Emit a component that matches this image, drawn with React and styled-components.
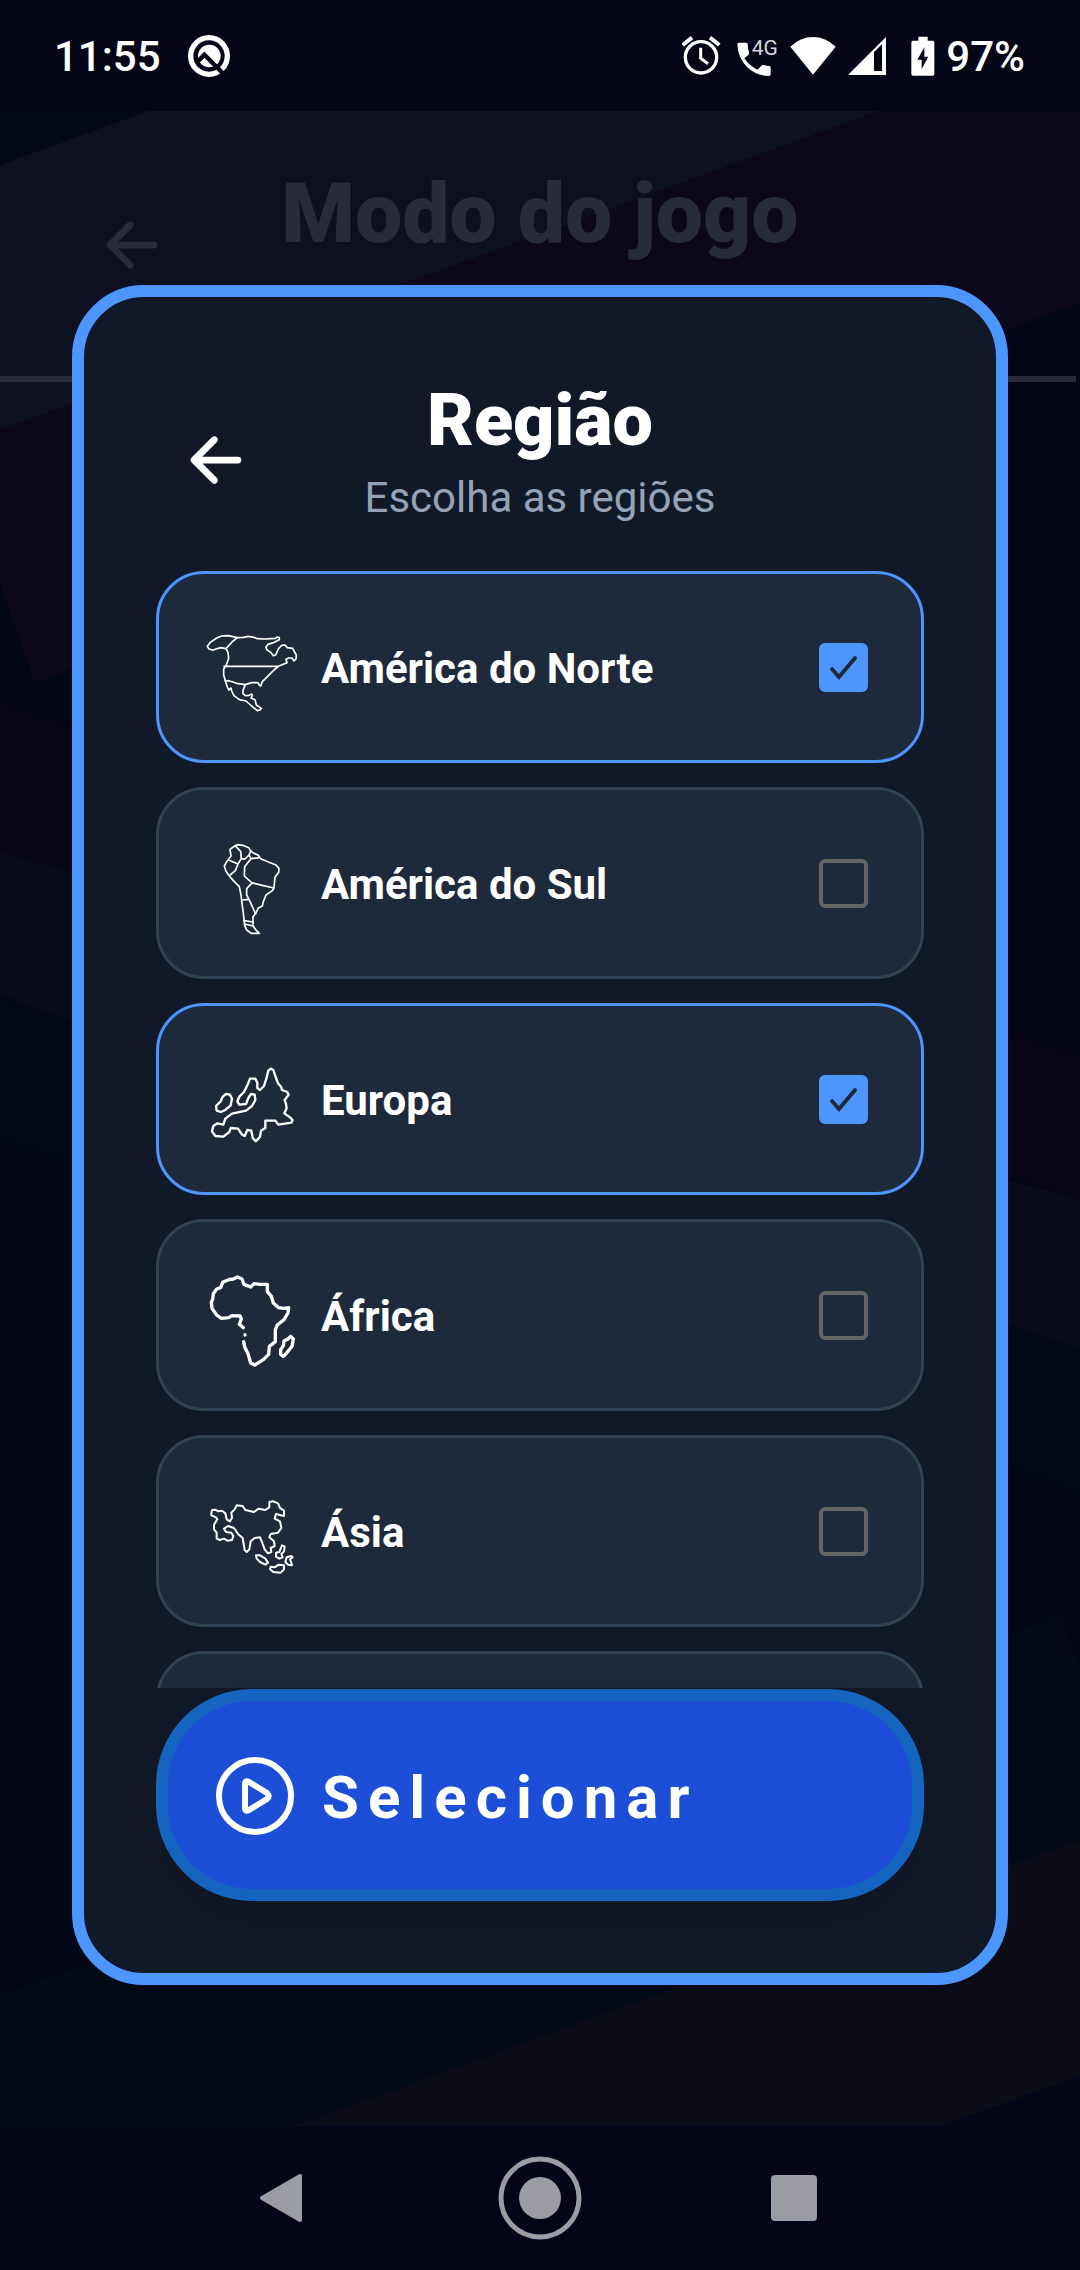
import React, { useState } from "react";
import styled, { createGlobalStyle } from "styled-components";
import { IoArrowBack } from "react-icons/io5";

const GlobalStyle = createGlobalStyle`
  * {
    box-sizing: border-box;
  }
  body {
    margin: 0;
    background: #030617;
    font-family: Roboto, "Noto Sans", sans-serif;
  }
  button {
    border: none;
    background: none;
    padding: 0;
    color: inherit;
    font: inherit;
    cursor: pointer;
  }
  svg {
    display: block;
    flex-shrink: 0;
  }
`;

const Screen = styled.div`
  min-height: 100vh;
  display: flex;
  flex-direction: column;
  color: #fff;
`;

const StatusBar = styled.div`
  height: 111px;
  display: flex;
  align-items: center;
  justify-content: space-between;
  padding: 0 55px 0 54px;
  font-size: 42px;
  font-weight: 500;
  line-height: 48px;
`;

const StatusGroup = styled.div`
  display: flex;
  align-items: center;
  gap: ${({ $gap }) => $gap}px;
`;

const StatusText = styled.span`
  padding-top: 3px;
`;

const Battery = styled.svg`
  margin-left: 14px;
`;

const Game = styled.main`
  position: relative;
  flex: 1;
`;

const Backdrop = styled.svg`
  position: absolute;
  inset: 0;
  width: 100%;
  height: 100%;
`;

const GameHeader = styled.header`
  position: relative;
  display: grid;
  grid-template-columns: 72px 1fr 72px;
  align-items: center;
  padding: 36px 92px 95px 96px;
  margin-right: 4px;
  border-bottom: 6px solid #282b39;
  color: #282b39;
`;

const GameTitle = styled.h1`
  margin: 0;
  font-size: 84px;
  font-weight: 900;
  line-height: 110px;
  text-align: center;
  white-space: nowrap;
`;

const BackButton = styled.button`
  && {
    padding-top: ${({ $top }) => $top}px;
  }
`;

const NavBar = styled.nav`
  height: 144px;
  display: flex;
  align-items: center;
  justify-content: center;
  gap: 170px;
`;

const Overlay = styled.div`
  position: fixed;
  inset: 0;
  display: flex;
  align-items: center;
  justify-content: center;
  padding: 0 72px;
  pointer-events: none;
`;

const Modal = styled.section`
  width: 100%;
  max-height: calc(100vh - 570px);
  display: flex;
  flex-direction: column;
  padding: 72px;
  border: 12px solid #4d96ff;
  border-radius: 72px;
  background: #111827;
  pointer-events: auto;
`;

const ModalHeader = styled.header`
  display: grid;
  grid-template-columns: 72px 1fr 72px;
  align-items: center;
  padding: 0 24px;
  margin-bottom: 48px;
  text-align: center;
`;

const Title = styled.h2`
  margin: 0;
  font-size: 72px;
  font-weight: 900;
  line-height: 104px;
`;

const Subtitle = styled.p`
  margin: 0;
  font-size: 42px;
  line-height: 50px;
  color: #94a3b8;
`;

const List = styled.div`
  flex: 1;
  min-height: 0;
  display: flex;
  flex-direction: column;
  gap: 24px;
  overflow-y: auto;
  scrollbar-width: none;
`;

const Card = styled.label`
  flex: 0 0 192px;
  display: flex;
  align-items: center;
  gap: 24px;
  padding: 0 53px 0 48px;
  border: 3px solid ${({ $active }) => ($active ? "#4d96ff" : "#334155")};
  border-radius: 48px;
  background: #1e293b;
  cursor: pointer;
`;

const MapIcon = styled.svg`
  width: 90px;
  height: 102px;
  padding-top: 12px;
  overflow: visible;
  fill: none;
  stroke: #fff;
  stroke-linejoin: round;
  stroke-linecap: round;
`;

const RegionName = styled.span`
  flex: 1;
  padding-top: 3px;
  font-size: 42px;
  font-weight: 700;
  line-height: 50px;
`;

const CheckBox = styled.span`
  display: grid;
  place-items: center;

  > * {
    grid-area: 1 / 1;
  }
  svg {
    pointer-events: none;
  }
`;

const CheckInput = styled.input`
  appearance: none;
  width: 49px;
  height: 49px;
  margin: 0;
  border: 4px solid #646464;
  border-radius: 6px;
  cursor: pointer;

  &:checked {
    border-color: #4d96ff;
    background: #4d96ff;
  }
`;

const SelectButton = styled.button`
  && {
    flex-shrink: 0;
    height: 212px;
    display: flex;
    align-items: center;
    gap: 19px;
    margin-top: 1px;
    padding: 0 39px;
    border: 12px solid #1565c0;
    border-radius: 96px;
    background: #1d4ed8;
    box-shadow: 0 24px 36px rgba(0, 0, 0, 0.08);
  }
`;

const SelectText = styled.span`
  padding-top: 6px;
  font-size: 60px;
  font-weight: 700;
  line-height: 70px;
  letter-spacing: 9px;
`;

const regions = [
  {
    id: "na",
    name: "América do Norte",
    viewBox: "171 189 270 270",
    stroke: 5,
    paths: [
      "M188 256L176 251 172 244 181 232 200 219 215 213 235 212 262 218 280 217 295 214 312 217 322 221 345 222 378 220 380 216 388 218 388 224 370 233 354 238 348 246 350 254 362 262 370 272 377 270 386 250 395 241 405 240 412 248 428 250 432 258 439 270 438 282 432 288 426 279 416 279 408 283 411 293 385 304 372 315 355 332 347 340 337 350 332 363 328 360 324 353 305 353 286 359 279 376 279 386 286 392 297 391 305 387 307 392 303 399 315 404 319 420 334 430 331 434 322 437 305 423 288 408 268 404 252 392 245 378 243 369 236 375 232 366 227 350 221 330 221 312 229 300 236 280 234 262 228 251 212 248 198 252Z",
      "M262 218L246 231 228 251M222 304H385M225 348L236 347 260 355 286 359",
    ],
  },
  {
    id: "sa",
    name: "América do Sul",
    viewBox: "171 192 270 270",
    stroke: 5,
    paths: [
      "M254 198L262 194 278 196 296 203 303 214 312 220 325 226 332 236 350 244 378 255 387 265 386 277 375 292 372 322 368 331 348 345 340 365 337 378 325 384 317 400 309 410 309 438 318 450 328 460 304 460 290 450 284 436 280 400 276 370 273 345 268 320 250 302 238 288 228 274 223 258 232 242 243 228 240 208Z",
      "M256 198L272 214 274 236 264 252 256 272 240 285M236 240L264 252M274 236L285 237 297 225 303 212M297 225L303 236 328 233M303 236L284 260 283 288 305 308 340 317 372 324M305 310L290 326 290 345 297 358M276 360L297 358 317 402M282 422L309 426M284 432L309 438",
    ],
  },
  {
    id: "eu",
    name: "Europa",
    viewBox: "171 180 270 270",
    stroke: 7,
    paths: [
      "M362 206L370 210 376 228 384 250 393 260 396 270 412 276 416 284 404 300 408 312 410 325 403 340 420 352 428 360 424 368 385 374 376 362 346 362 346 384 333 392 330 410 318 424 308 414 304 392 292 390 284 408 276 404 264 386 242 384 238 396 220 410 196 408 186 394 190 378 202 370 220 374 226 356 246 341 288 332 306 318 316 300 314 284 303 282 295 294 288 312 268 314 262 304 268 290 282 276 292 256 300 236 316 236 322 248 322 264 330 270 342 258 350 232 355 212Z",
      "M228 282L240 284 246 296 242 316 226 330 212 336 200 332 198 318 212 304 218 290Z",
    ],
  },
  {
    id: "af",
    name: "África",
    viewBox: "171 183 270 270",
    stroke: 10,
    paths: [
      "M281 380L284 396 294 416 302 444 314 450 340 434 356 418 358 394 376 380 376 344 382 330 402 314 414 294 416 278 400 280 386 278 370 264 364 244 352 230 352 208 330 208 312 206 302 216 282 208 276 192 262 186 250 192 236 194 218 202 212 218 200 222 190 236 188 252 184 262 186 280 200 300 214 310 236 308 246 302 270 303 274 312 268 328 280 338",
      "M285 359v1M422 364L430 372 426 394 410 414 400 424 392 418 392 404 400 392 402 378 414 372Z",
    ],
  },
  {
    id: "as",
    name: "Ásia",
    viewBox: "171 186 270 270",
    stroke: 6,
    paths: [
      "M184 250L186 240 196 239 204 244 216 242 226 250 230 268 240 274 246 264 244 248 254 238 260 226 278 228 286 240 312 246 326 236 346 240 358 232 358 216 370 214 384 220 390 234 402 242 402 258 378 252 374 266 390 274 394 294 384 308 362 312 358 322 372 334 374 348 362 354 364 366 354 370 344 358 336 336 330 322 314 324 302 334 298 358 290 366 284 360 278 324 264 312 252 294 234 288 222 296 228 306 244 308 250 318 246 330 232 332 222 326 210 330 200 326 200 308 192 298 192 284 202 268 198 262 184 256Z",
      "M318 376L330 376 346 386 354 398 346 404 330 396 320 386ZM396 346L404 350 402 364 394 372 398 382 388 386 378 380 378 368 388 366ZM424 378L428 382 420 388 424 398 426 406 414 404 406 396 410 382ZM362 410L374 412 386 404 402 406 402 418 392 428 370 426 360 418Z",
    ],
  },
  { id: "oc", label: "Oceania", viewBox: "0 0 270 270", stroke: 6, paths: [] },
];

const GameBackdrop = () => (
  <Backdrop viewBox="0 111 1080 2015" preserveAspectRatio="none" aria-hidden="true">
    <path fill="#020a17" d="M0 111H148L0 165Z" />
    <path fill="#0d1021" d="M148 111H880L0 430V165Z" />
    <path fill="#0c0719" d="M880 111H1080V303L35 683 0 583V430Z" />
    <path fill="#080616" d="M0 702L1080 1055V1200L0 852Z" />
    <path fill="#080b1b" d="M0 852L72 873 1008 1180 1080 1200V1348L1008 1325 72 1021 0 995Z" />
    <path fill="#020817" d="M0 995L72 1021 1008 1325 1080 1348V1494L1008 1467 0 1140Z" />
    <path fill="#020917" d="M0 1995L1060 1615 1080 1665V1840L295 2126H0Z" />
    <path fill="#0b0c16" d="M1080 1840V2076L940 2126H295Z" />
  </Backdrop>
);

const StatusIcons = () => (
  <>
    <svg width="44" height="40" viewBox="125 48 132 120" fill="none" stroke="#fff">
      <circle cx="182" cy="112" r="47" strokeWidth="10" />
      <path d="M127 75L155 53M237 75L209 53" strokeWidth="12" />
      <path d="M181 83V115L203 131" strokeWidth="9" />
    </svg>
    <svg width="44" height="40" viewBox="285 48 132 120" fill="#fff" overflow="visible">
      <path d="M293 68H316Q320 68 320 73 320 86 324 97 325 102 322 105L310 115Q326 139 350 149L361 137Q364 134 368 135 377 138 385 138 389 139 389 143V163Q389 168 383 168 345 167 318 141 291 113 289 74 289 69 293 68Z" />
      <text x="332" y="104" fontSize="63" fontWeight="400" fill="#d5d6db">
        4G
      </text>
    </svg>
    <svg width="48" height="40" viewBox="446 44 144 120" fill="#fff">
      <path d="M447 76Q477 47 515 47T583 76L515 160Z" />
    </svg>
    <svg width="38" height="40" viewBox="621 44 114 120">
      <path fill="#fff" fillRule="evenodd" d="M621 161L735 47V161ZM699 92V149H723V69Z" />
    </svg>
    <Battery width="26" height="40" viewBox="812 46 78 120">
      <path
        fill="#fff"
        fillRule="evenodd"
        d="M837 48H865V60H880Q885 60 885 66V159Q885 165 880 165H821Q816 165 816 159V66Q816 60 821 60H837ZM855 80L834 117H847V145L867 108H855Z"
      />
    </Battery>
  </>
);

const PlayIcon = () => (
  <svg width="96" height="96" viewBox="0 0 96 96" fill="none" stroke="#fff" strokeWidth="6">
    <circle cx="48" cy="49" r="36" />
    <path
      d="M38 37V61Q38 65 42 63L60 52Q63 49 60 46L42 35Q38 33 38 37Z"
      strokeLinejoin="round"
    />
  </svg>
);

const RegionCard = ({ region, checked, onToggle }) => (
  <Card $active={checked}>
    <MapIcon viewBox={region.viewBox} strokeWidth={region.stroke} aria-hidden="true">
      {region.paths.map((d) => (
        <path key={d} d={d} />
      ))}
    </MapIcon>
    <RegionName>{region.name}</RegionName>
    <CheckBox>
      <CheckInput
        type="checkbox"
        aria-label={region.label}
        checked={checked}
        onChange={() => onToggle(region.id)}
      />
      {checked && (
        <svg width="49" height="49" fill="none" stroke="#1e293b" strokeWidth="4" strokeLinecap="round">
          <path d="M13 26L20 34L36 15" />
        </svg>
      )}
    </CheckBox>
  </Card>
);

const App = () => {
  const [selected, setSelected] = useState(["na", "eu"]);

  const toggle = (id) => {
    setSelected((prev) =>
      prev.includes(id) ? prev.filter((item) => item !== id) : [...prev, id]
    );
  };

  return (
    <Screen>
      <GlobalStyle />
      <StatusBar>
        <StatusGroup $gap={26}>
          <StatusText>11:55</StatusText>
          <svg width="44" height="44" viewBox="441 39 132 132">
            <circle cx="507" cy="105" r="55" fill="none" stroke="#fff" strokeWidth="16" />
            <circle cx="508" cy="105" r="34" fill="#fff" />
            <path d="M475 120L493 101L556 164" fill="none" stroke="#030617" strokeWidth="13" />
          </svg>
        </StatusGroup>
        <StatusGroup $gap={10}>
          <StatusIcons />
          <StatusText>97%</StatusText>
        </StatusGroup>
      </StatusBar>

      <Game>
        <GameBackdrop />
        <GameHeader>
          <BackButton $top={62} aria-label="Voltar ao menu">
            <IoArrowBack size={72} />
          </BackButton>
          <GameTitle>Modo do jogo</GameTitle>
        </GameHeader>
      </Game>

      <NavBar>
        <button aria-label="Voltar">
          <svg width="84" height="84" fill="#9b9ba3" stroke="#9b9ba3" strokeWidth="4" strokeLinejoin="round">
            <path d="M18 42L56 20V64Z" />
          </svg>
        </button>
        <button aria-label="Início">
          <svg width="84" height="84">
            <circle cx="42" cy="42" r="39" fill="none" stroke="#9b9ba3" strokeWidth="5" />
            <circle cx="42" cy="42" r="21" fill="#9b9ba3" />
          </svg>
        </button>
        <button aria-label="Recentes">
          <svg width="84" height="84">
            <rect x="19" y="19" width="46" height="46" rx="4" fill="#9b9ba3" />
          </svg>
        </button>
      </NavBar>

      <Overlay>
        <Modal role="dialog" aria-labelledby="region-title">
          <ModalHeader>
            <BackButton $top={28} aria-label="Fechar">
              <IoArrowBack size={72} />
            </BackButton>
            <div>
              <Title id="region-title">Região</Title>
              <Subtitle>Escolha as regiões</Subtitle>
            </div>
          </ModalHeader>
          <List>
            {regions.map((region) => (
              <RegionCard
                key={region.id}
                region={region}
                checked={selected.includes(region.id)}
                onToggle={toggle}
              />
            ))}
          </List>
          <SelectButton>
            <PlayIcon />
            <SelectText>Selecionar</SelectText>
          </SelectButton>
        </Modal>
      </Overlay>
    </Screen>
  );
};

export default App;
